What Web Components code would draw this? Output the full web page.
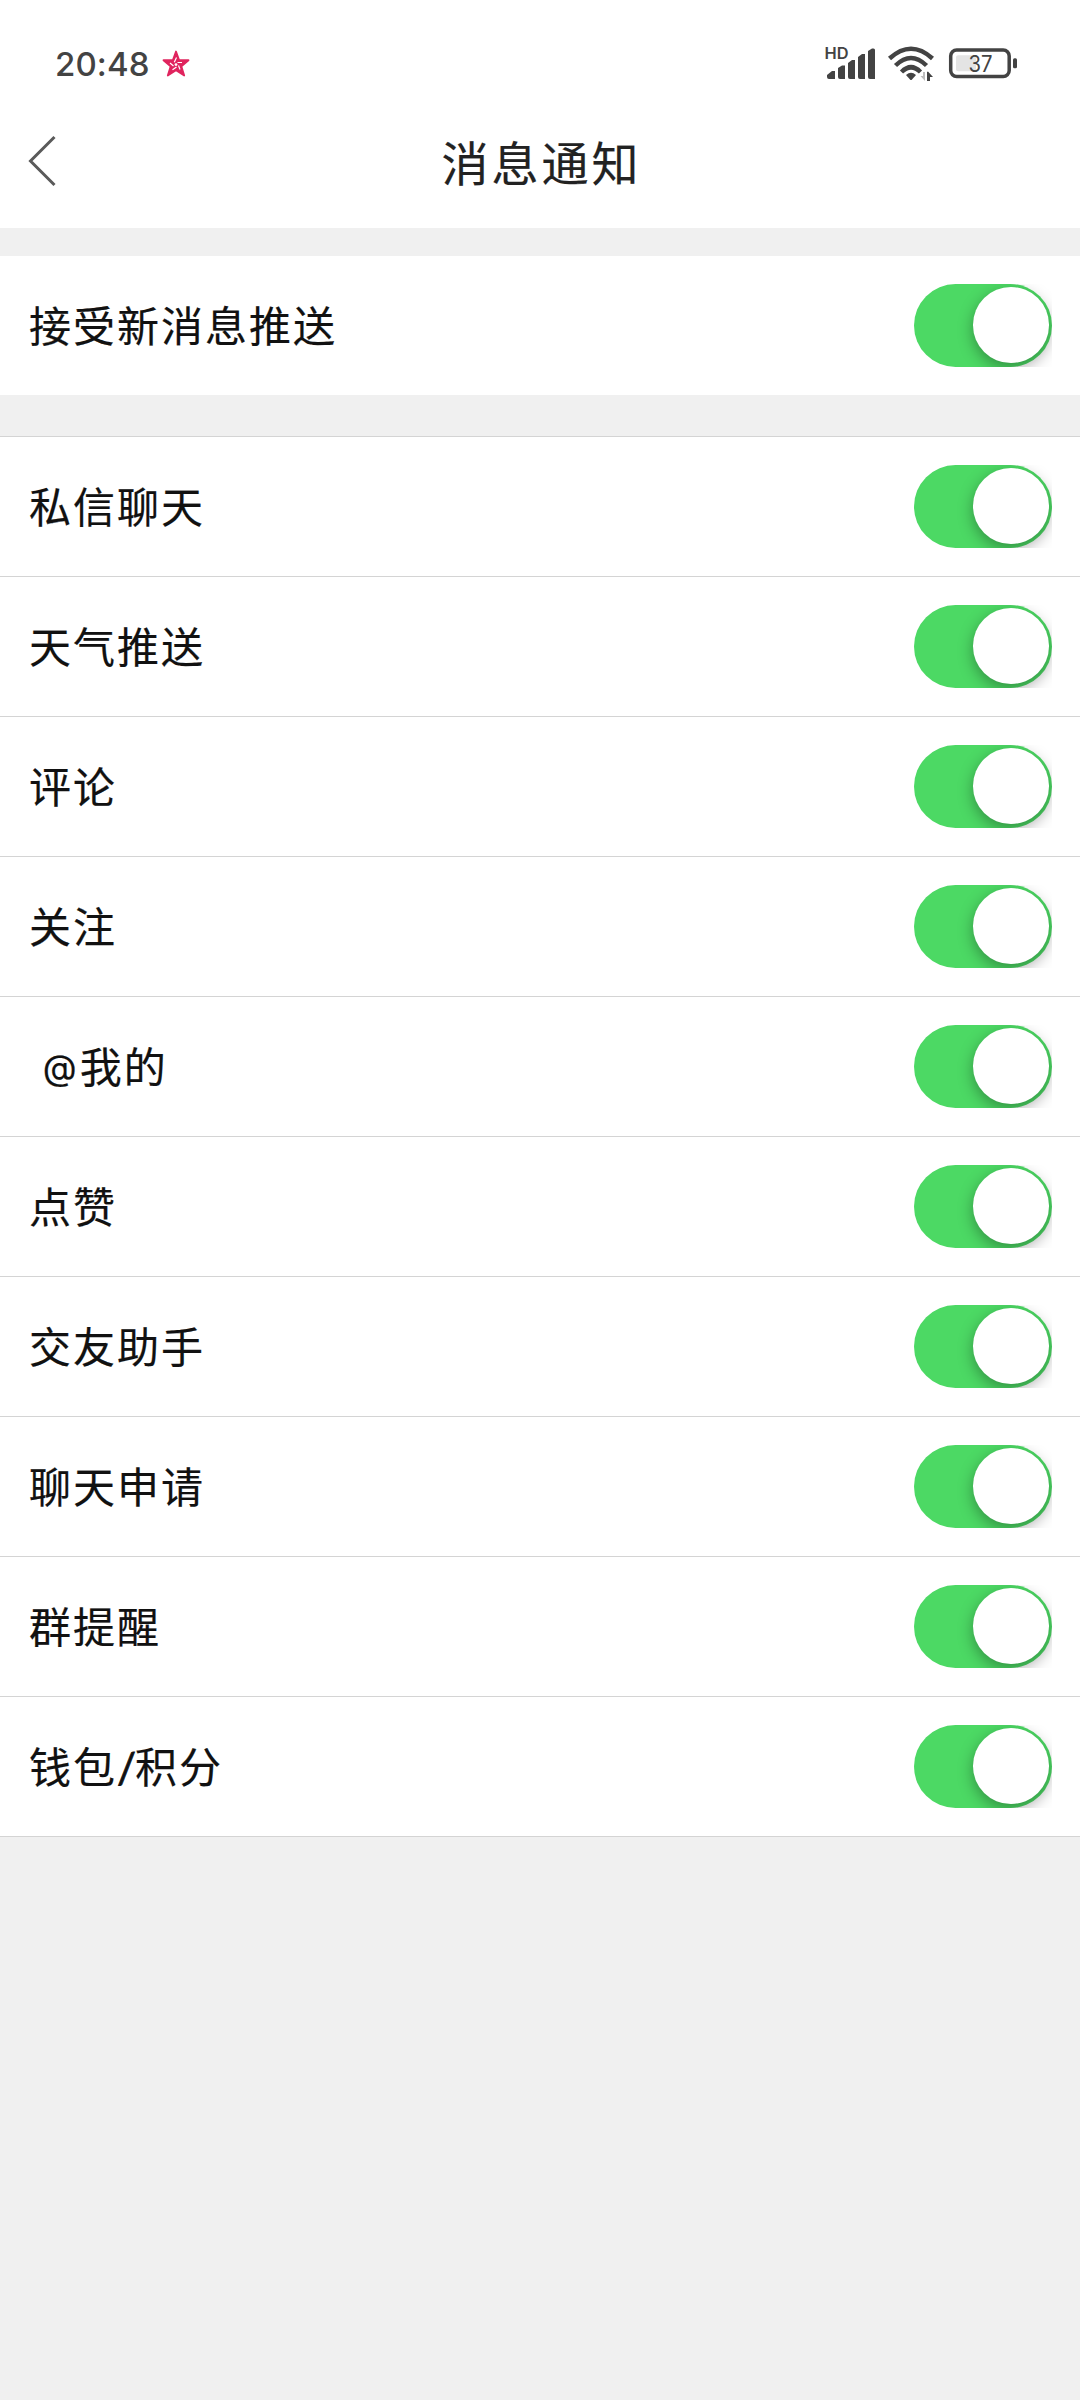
<!DOCTYPE html>
<html lang="zh-CN">
<head>
<meta charset="utf-8">
<title>消息通知</title>
<style>
    html, body {
        margin: 0;
        background: #f0f0f0;
    }
    body {
        font-family: "Noto Sans CJK SC", sans-serif;
        color: #111;
    }
</style>
</head>
<body>
<notification-page></notification-page>

<script>
class StatusBar extends HTMLElement {
    connectedCallback() {
        const shadow = this.attachShadow({mode: 'open'});
        shadow.innerHTML = `
        <style>
        :host {
            display: flex;
            align-items: center;
            height: 100px;
            padding: 27px 62px 0 55px;
            box-sizing: border-box;
            font-family: Inter, sans-serif;
            color: #434343;
            background: #fff;
        }
        .time {
            font-size: 33px;
            font-weight: 500;
            line-height: 40px;
            letter-spacing: 0.1px;
        }
        .star {
            margin-left: 11px;
        }
        .icons {
            margin-left: auto;
        }
        svg {
            display: block;
        }
        </style>
        <span class="time">${this.getAttribute('time')}</span>
        <svg class="star" width="30" height="30" viewBox="0 0 30 30">
            <path d="M15 2.500 18.200 11.200H27.500L20.400 17.400 23.200 26.500 15 21.300 6.800 26.500 9.600 17.400 2.500 11.200H11.800Z" fill="#e0245e" stroke="#e0245e" stroke-width="1.800" stroke-linejoin="round"/>
            <path d="M15.500 8.500 13.300 13.200M21 13.500H16.500M19 20.500 17.500 16.500M11.500 20.700 15.500 18M9 14 12.500 17" stroke="#fff" stroke-width="1.200" fill="none"/>
            <circle cx="15" cy="15.600" r="1.400" fill="#fff"/>
        </svg>
        <svg class="icons" width="194" height="44" viewBox="824 42 194 44" fill="#434343">
            <text x="824.5" y="58.800" font-size="15.500" font-weight="600" textLength="24" lengthAdjust="spacingAndGlyphs">HD</text>
            <path d="M827 77v-2l5-4h3v8h-6a2 2 0 0 1-2-2ZM838 77V68l4-2.500h3V79h-5a2 2 0 0 1-2-2ZM848 77V63l4-3h3V79h-5a2 2 0 0 1-2-2ZM858 77V57l4-3h3V79h-5a2 2 0 0 1-2-2ZM868 77V51l4-2.500h1.500q1.500 0 1.500 1.500V79h-5a2 2 0 0 1-2-2Z"/>
            <g fill="none" stroke="#434343" stroke-width="4.500">
                <path d="M889.500 58.500Q911 39 932.500 58.500"/>
                <path d="M895.500 65.500Q911 50.500 926.500 65.500"/>
                <path d="M901.500 72Q911 62.500 920.500 72"/>
            </g>
            <path d="M906 75q5-4.500 10 0l-4 4.500q-1 1-2 0Z"/>
            <path d="M925 72v9l-4.500-5H923v-4Z" fill="#bdbdbd"/>
            <path d="M927 81v-9l1-.5 5 5.500h-3v4Z"/>
            <rect x="950.700" y="50" width="58.500" height="26.500" rx="6" fill="none" stroke="#434343" stroke-width="3.500"/>
            <rect x="956" y="55.300" width="20" height="16" rx="2" fill="#e4e4e4"/>
            <rect x="1013" y="58.300" width="4" height="10" rx="1.500"/>
            <text x="968.500" y="72" font-size="22.500" font-weight="400" textLength="24" lengthAdjust="spacingAndGlyphs">37</text>
        </svg>`;
    }
}

class NavBar extends HTMLElement {
    connectedCallback() {
        const shadow = this.attachShadow({mode: 'open'});
        shadow.innerHTML = `
        <style>
        :host {
            display: grid;
            grid-template-columns: 80px 1fr 80px;
            align-items: center;
            height: 128px;
            background: #fff;
        }
        svg {
            display: block;
            margin: 0 0 6px 28px;
        }
        h1 {
            margin: 0;
            padding: 0 0 6px 3px;
            font-size: 47px;
            line-height: 64px;
            font-weight: 400;
            letter-spacing: 3px;
            text-align: center;
            color: #222;
            -webkit-text-stroke: 0.2px #222;
        }
        </style>
        <svg width="30" height="52" viewBox="0 0 30 52">
            <path d="M26.500 2 2.500 26 26.500 50" fill="none" stroke="#5a5a5a" stroke-width="3"/>
        </svg>
        <h1><slot></slot></h1>`;
    }
}

class ToggleSwitch extends HTMLElement {
    connectedCallback() {
        const shadow = this.attachShadow({mode: 'open'});
        // the knob shadow spills past the track but is clipped by the host box
        shadow.innerHTML = `
        <style>
        :host {
            display: block;
            width: 138px;
            height: 83px;
            overflow: hidden;
        }
        .track {
            display: flex;
            justify-content: flex-end;
            box-sizing: border-box;
            height: 83px;
            padding: 3px 3px 0 0;
            border-radius: 42px;
            background: #4cd964;
        }
        .knob {
            width: 76px;
            height: 75.5px;
            border-radius: 50%;
            background: #fff;
            box-shadow: 0 5px 15px rgba(0, 0, 0, 0.34);
        }
        </style>
        <div class="track"><div class="knob"></div></div>`;
    }
}

class SettingRow extends HTMLElement {
    connectedCallback() {
        const shadow = this.attachShadow({mode: 'open'});
        shadow.innerHTML = `
        <style>
        :host {
            display: flex;
            justify-content: space-between;
            align-items: center;
            height: 139px;
            padding: 0 28px 0 29px;
            background: #fff;
        }
        .label {
            padding-bottom: 3px;
            font-family: "Noto Sans CJK SC", sans-serif;
            font-size: 42px;
            line-height: 60px;
            letter-spacing: 2px;
            white-space: pre;
            -webkit-text-stroke: 0.2px #111;
        }
        .slash {
            font-family: Lato, sans-serif;
            line-height: 1;
            letter-spacing: -1px;
            -webkit-text-stroke: 0.8px #111;
        }
        .at {
            font-family: Inter, sans-serif;
            font-size: 35px;
            line-height: 1;
            vertical-align: 3px;
            letter-spacing: 3px;
            word-spacing: 1px;
        }
        </style>
        <span class="label"></span>
        <toggle-switch></toggle-switch>`;
        const label = shadow.querySelector('.label');
        label.innerHTML = this.textContent
            .replace(/\//g, '<span class="slash">$&</span>')
            .replace(/ @/g, '<span class="at">$&</span>');
    }
}

class SettingGroup extends HTMLElement {
    connectedCallback() {
        const shadow = this.attachShadow({mode: 'open'});
        shadow.innerHTML = `
        <style>
        :host {
            display: block;
        }
        :host([lined]) {
            border-top: 1px solid #d4d4d4;
        }
        :host([lined]) ::slotted(setting-row) {
            border-bottom: 1px solid #d4d4d4;
        }
        </style>
        <slot></slot>`;
    }
}

class NotificationPage extends HTMLElement {
    connectedCallback() {
        const labels = [
            '私信聊天', '天气推送', '评论', '关注', ' @我的',
            '点赞', '交友助手', '聊天申请', '群提醒', '钱包/积分',
        ];
        const shadow = this.attachShadow({mode: 'open'});
        shadow.innerHTML = `
        <style>
        :host {
            display: flex;
            flex-direction: column;
            min-height: 2400px;
            background: #f0f0f0;
        }
        .master {
            margin: 28px 0 41px;
        }
        </style>
        <status-bar time="20:48"></status-bar>
        <nav-bar>消息通知</nav-bar>
        <setting-group class="master"><setting-row>接受新消息推送</setting-row></setting-group>
        <setting-group lined>
            ${labels.map(label => `<setting-row>${label}</setting-row>`).join('')}
        </setting-group>`;
    }
}

customElements.define('status-bar', StatusBar);
customElements.define('nav-bar', NavBar);
customElements.define('toggle-switch', ToggleSwitch);
customElements.define('setting-row', SettingRow);
customElements.define('setting-group', SettingGroup);
customElements.define('notification-page', NotificationPage);
</script>
</body>
</html>
